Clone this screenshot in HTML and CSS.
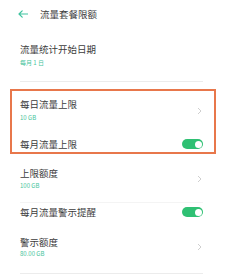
FILE: index.html
```html
<!DOCTYPE html>
<html lang="zh">
<head>
    <meta charset="UTF-8">
    <title>流量套餐限额</title>
    <link rel="stylesheet" href="styles.css">
</head>
<body>
    <div class="screen">
        <div class="header">
            <svg class="back" width="10" height="8" viewBox="0 0 10 8">
                <path d="M9.5 4H1M4.2 0.8L1 4l3.2 3.2" fill="none" stroke="#3fc39f" stroke-width="1.2" stroke-linecap="round" stroke-linejoin="round"/>
            </svg>
            <span class="title">流量套餐限额</span>
        </div>

        <div class="row row-date">
            <div class="text">
                <div class="label">流量统计开始日期</div>
                <div class="sub">每月 1 日</div>
            </div>
        </div>
        <div class="divider"></div>

        <div class="row row-daily">
            <div class="text">
                <div class="label">每日流量上限</div>
                <div class="sub">10 GB</div>
            </div>
            <svg class="chev" width="5" height="8" viewBox="0 0 5 8"><path d="M1 1l3 3-3 3" fill="none" stroke="#c9c9c9" stroke-width="0.9"/></svg>
        </div>
        <div class="row row-month">
            <div class="label">每月流量上限</div>
            <div class="toggle"><span class="knob"></span></div>
        </div>

        <div class="row row-limit">
            <div class="text">
                <div class="label">上限额度</div>
                <div class="sub">100 GB</div>
            </div>
            <svg class="chev" width="5" height="8" viewBox="0 0 5 8"><path d="M1 1l3 3-3 3" fill="none" stroke="#c9c9c9" stroke-width="0.9"/></svg>
        </div>
        <div class="divider faint"></div>

        <div class="row row-warn">
            <div class="label">每月流量警示提醒</div>
            <div class="toggle"><span class="knob"></span></div>
        </div>
        <div class="row row-warnval">
            <div class="text">
                <div class="label">警示额度</div>
                <div class="sub">80.00 GB</div>
            </div>
            <svg class="chev" width="5" height="8" viewBox="0 0 5 8"><path d="M1 1l3 3-3 3" fill="none" stroke="#c9c9c9" stroke-width="0.9"/></svg>
        </div>
        <div class="divider"></div>

        <div class="highlight"></div>
    </div>
</body>
</html>
```
FILE: styles.css
```css
body {
    margin: 0;
    background: #fff;
    font-family: "Noto Sans CJK SC", "Noto Sans", sans-serif;
    color: #3c3c3c;
}
.screen {
    position: relative;
    width: 226px;
    height: 274px;
    overflow: hidden;
}
.header {
    height: 28px;
    display: flex;
    align-items: center;
    padding-left: 18px;
}
.back {
    display: block;
}
.title {
    margin-left: 12px;
    font-size: 9.5px;
    line-height: 13px;
}
.row {
    display: flex;
    align-items: center;
    justify-content: space-between;
    padding: 0 23px 0 20px;
}
.label {
    font-size: 9.5px;
    line-height: 13px;
}
.sub {
    font-size: 6px;
    line-height: 13px;
    color: #46c49c;
}
.chev {
    display: block;
    margin-right: 1px;
}
.toggle {
    width: 21px;
    height: 10px;
    border-radius: 5px;
    background: #2fc073;
    display: flex;
    align-items: center;
    justify-content: flex-end;
    padding-right: 1.5px;
    box-sizing: border-box;
}
.knob {
    width: 7px;
    height: 7px;
    border-radius: 50%;
    background: #fff;
}
.divider {
    height: 1px;
    margin: 0 23px 0 20px;
    background: #ececec;
}
.divider.faint {
    background: #f4f4f4;
}
.row-date {
    padding-top: 14.5px;
    padding-bottom: 12.5px;
}
.row-daily {
    padding-top: 15.5px;
    padding-bottom: 7px;
}
.row-month {
    padding-top: 7px;
    padding-bottom: 8px;
}
.row-limit {
    padding-top: 8px;
    padding-bottom: 11px;
}
.row-limit .sub {
    line-height: 11px;
}
.row-warn {
    padding-top: 3px;
    padding-bottom: 17px;
}
.row-warnval {
    padding-top: 0;
    padding-bottom: 15px;
}
.row-warnval .sub {
    line-height: 9px;
}
.highlight {
    position: absolute;
    left: 10px;
    top: 89px;
    width: 206px;
    height: 65px;
    border: 2px solid #e8774b;
    box-sizing: border-box;
}
```
